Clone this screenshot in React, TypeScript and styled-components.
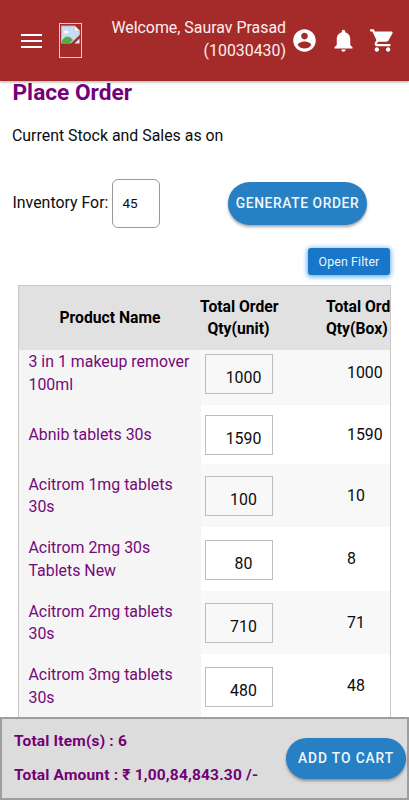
import React from "react";
import styled, { createGlobalStyle } from "styled-components";

const GlobalStyle = createGlobalStyle`
  * { box-sizing: border-box; }
  body {
    margin: 0;
    background: #fff;
    color: #0c0c0c;
    font-family: Roboto, sans-serif;
    font-size: 15.9px;
    line-height: 22.5px;
    overflow: hidden;
  }
`;

const Screen = styled.div`
  display: flex;
  flex-direction: column;
  height: 800px;
  width: 409px;
  overflow: hidden;
`;

const TopBar = styled.header`
  display: flex;
  align-items: center;
  flex: 0 0 81px;
  padding: 0 13px 0 21px;
  background: #a52a2a;
  color: #fff;
  box-shadow: 0 1px 3px rgba(0, 0, 0, 0.35);
  z-index: 2;
`;

const MenuLines = styled.svg`
  flex: none;
  width: 21px;
  height: 14px;
  margin-right: 17px;
`;

const Logo = styled.svg`
  flex: none;
  width: 23px;
  height: 35px;
`;

const Welcome = styled.div`
  flex: 1;
  text-align: right;
  color: #fbefef;
  line-height: 22.5px;
  margin-top: -2px;
  white-space: nowrap;
`;

const BarIcon = styled.svg<{ $gap: number }>`
  flex: none;
  width: 27px;
  height: 27px;
  margin-left: ${(p) => p.$gap}px;
  fill: #fff;
`;

const Title = styled.h1`
  margin: 0 0 0 12.5px;
  height: 43px;
  font-size: 22.7px;
  line-height: 23px;
  font-weight: 700;
  color: #750078;
`;

const Subtitle = styled.p`
  margin: 0 0 0 12px;
  height: 55px;
  line-height: 24px;
`;

const Controls = styled.div`
  display: flex;
  align-items: center;
  height: 49px;
  padding: 0 42px 0 12.5px;
`;

const DaysInput = styled.div`
  width: 48px;
  height: 49px;
  margin-left: 3.5px;
  padding-left: 9.5px;
  border: 1px solid #999;
  border-radius: 6px;
  font-size: 13.5px;
  line-height: 46px;
`;

const PillButton = styled.button<{ $width: number; $height: number; $spacing: number }>`
  flex: none;
  width: ${(p) => p.$width}px;
  height: ${(p) => p.$height}px;
  margin-left: auto;
  padding: 0 0 1px;
  border: 0;
  border-radius: 22px;
  background: #2780c3;
  color: #eef8ff;
  font: 500 13.8px/20px Roboto, sans-serif;
  letter-spacing: ${(p) => p.$spacing}px;
  box-shadow: 0 2px 3px rgba(0, 0, 0, 0.35);
  white-space: nowrap;
`;

const FilterButton = styled.button`
  align-self: flex-end;
  flex: none;
  width: 82px;
  height: 27px;
  margin: 20px 19px 10px 0;
  padding: 0;
  border: 0;
  border-radius: 3px;
  background: #1976c8;
  color: #e8f6ff;
  font: 400 12.4px/26px Roboto, sans-serif;
  letter-spacing: 0.1px;
  box-shadow: 0 1px 5px 1px #64b0f2;
`;

const Table = styled.section`
  flex: 1;
  min-height: 0;
  width: 373px;
  margin-left: 18px;
  border: solid #c8c8c8;
  border-width: 1px 1px 0 1px;
  overflow: hidden;
`;

const columns = "182px 125px 120px";

const HeadRow = styled.div`
  display: grid;
  grid-template-columns: ${columns};
  height: 64px;
  align-items: center;
  position: relative;
  z-index: 1;
  background: #e1e1e1;
  color: #000;
  font-weight: 700;
  font-size: 15.7px;
`;

const HeadCell = styled.div<{ $align?: string }>`
  text-align: ${(p) => p.$align ?? "center"};
  white-space: nowrap;
`;

const UnitHead = styled(HeadCell)`
  width: 77px;
  margin-left: -1px;
`;

const Rows = styled.div`
  margin-top: -9px;
`;

const Row = styled.div<{ $height: number; $shaded: boolean }>`
  display: grid;
  grid-template-columns: ${columns};
  height: ${(p) => p.$height}px;
  background: ${(p) => (p.$shaded ? "#f8f8f8" : "#fff")};
`;

const NameCell = styled.div`
  display: flex;
  align-items: center;
  padding: 1px 8px 0 9.5px;
  background: #f5f5f5;
  color: #740a79;
`;

const UnitCell = styled.div`
  display: flex;
  align-items: center;
  padding: 1px 0 0 4px;
`;

const QtyInput = styled.div`
  width: 68px;
  height: 40px;
  padding: 12px 0 0 9px;
  border: 1px solid #bdbdbd;
  text-align: center;
`;

const BoxCell = styled.div`
  display: flex;
  align-items: center;
  padding: 1px 0 0 21px;
`;

const Footer = styled.footer`
  display: flex;
  flex: 0 0 83px;
  align-items: center;
  padding: 0 1px 0 12px;
  border: 2px solid #9e9e9e;
  background: #dcdcdc;
  z-index: 2;
`;

const Totals = styled.div`
  display: flex;
  flex-direction: column;
  gap: 11px;
  margin-top: -1px;
  color: #730077;
  font-weight: 700;
  font-size: 15.5px;
  letter-spacing: 0.18px;
  white-space: nowrap;
`;

const products = [
  { name: "3 in 1 makeup remover 100ml", units: 1000, boxes: 1000, height: 64 },
  { name: "Abnib tablets 30s", units: 1590, boxes: 1590, height: 59 },
  { name: "Acitrom 1mg tablets 30s", units: 100, boxes: 10, height: 63 },
  { name: "Acitrom 2mg 30s Tablets New", units: 80, boxes: 8, height: 64 },
  { name: "Acitrom 2mg tablets 30s", units: 710, boxes: 71, height: 63 },
  { name: "Acitrom 3mg tablets 30s", units: 480, boxes: 48, height: 64 },
];

function BrokenImage() {
  return (
    <Logo viewBox="0 0 23 35">
      <rect x="0.5" y="0.5" width="22" height="34" fill="none" stroke="#f0c4c0" />
      <path d="M2.500 3H16L20.500 7.500V12L12 20H2.500Z" fill="#c9dcf5" stroke="#b9b4b8" />
      <path d="M3 19.500V17.500Q8 10 14 17L11 20H3Z" fill="#52ac43" />
      <ellipse cx="7" cy="9" rx="2.500" ry="1.500" fill="#fff" />
      <path d="M15.500 3V8H20.500Z" fill="#fff" stroke="#c9c4c8" strokeWidth="0.7" />
      <path d="M15.500 20.500L20.500 15.500V20.500Z" fill="#dfe6ef" />
    </Logo>
  );
}

export default function App() {
  return (
    <>
      <GlobalStyle />
      <Screen>
        <TopBar>
          <MenuLines viewBox="0 0 21 14">
            <path d="M0 1H21M0 7H21M0 13H21" stroke="#fff" strokeWidth="2" />
          </MenuLines>
          <BrokenImage />
          <Welcome>
            Welcome, Saurav Prasad
            <br />
            (10030430)
          </Welcome>
          <BarIcon $gap={5} viewBox="0 0 24 24">
            <path d="M12 2C6.480 2 2 6.480 2 12s4.480 10 10 10 10-4.480 10-10S17.520 2 12 2zm0 3c1.660 0 3 1.340 3 3s-1.340 3-3 3-3-1.340-3-3 1.340-3 3-3zm0 14.200c-2.500 0-4.710-1.280-6-3.220.030-1.990 4-3.080 6-3.080 1.990 0 5.970 1.090 6 3.080-1.290 1.940-3.500 3.220-6 3.220z" />
          </BarIcon>
          <BarIcon $gap={12} viewBox="0 0 24 24">
            <path d="M12 22c1.100 0 2-.900 2-2h-4c0 1.100.890 2 2 2zm6-6v-5c0-3.070-1.640-5.640-4.500-6.320V4c0-.830-.670-1.500-1.500-1.500s-1.500.670-1.500 1.500v.680C7.630 5.360 6 7.920 6 11v5l-2 2v1h16v-1l-2-2z" />
          </BarIcon>
          <BarIcon $gap={12} viewBox="0 0 24 24">
            <path d="M7 18c-1.100 0-1.990.900-1.990 2S5.900 22 7 22s2-.900 2-2-.900-2-2-2zM1 2v2h2l3.600 7.590-1.350 2.450c-.160.280-.250.610-.250.960 0 1.100.900 2 2 2h12v-2H7.420c-.140 0-.250-.110-.250-.250l.030-.120.900-1.630h7.450c.750 0 1.410-.410 1.750-1.030l3.580-6.490c.080-.140.120-.310.120-.480 0-.550-.450-1-1-1H5.210l-.940-2H1zm16 16c-1.100 0-1.990.900-1.990 2s.890 2 1.990 2 2-.900 2-2-.900-2-2-2z" />
          </BarIcon>
        </TopBar>
        <Title>Place Order</Title>
        <Subtitle>Current Stock and Sales as on</Subtitle>
        <Controls>
          <span>Inventory For:</span>
          <DaysInput>45</DaysInput>
          <PillButton $width={139} $height={43} $spacing={0.6}>
            GENERATE ORDER
          </PillButton>
        </Controls>
        <FilterButton>Open Filter</FilterButton>
        <Table>
          <HeadRow>
            <HeadCell>Product Name</HeadCell>
            <UnitHead>
              Total Order
              <br />
              Qty(unit)
            </UnitHead>
            <HeadCell $align="left">
              Total Order
              <br />
              Qty(Box)
            </HeadCell>
          </HeadRow>
          <Rows>
            {products.map((p, i) => (
              <Row key={p.name} $height={p.height} $shaded={i % 2 === 0}>
                <NameCell>{p.name}</NameCell>
                <UnitCell>
                  <QtyInput>{p.units}</QtyInput>
                </UnitCell>
                <BoxCell>{p.boxes}</BoxCell>
              </Row>
            ))}
          </Rows>
        </Table>
        <Footer>
          <Totals>
            <span>Total Item(s) : 6</span>
            <span>Total Amount : ₹ 1,00,84,843.30 /-</span>
          </Totals>
          <PillButton $width={120} $height={41} $spacing={0.9}>
            ADD TO CART
          </PillButton>
        </Footer>
      </Screen>
    </>
  );
}
